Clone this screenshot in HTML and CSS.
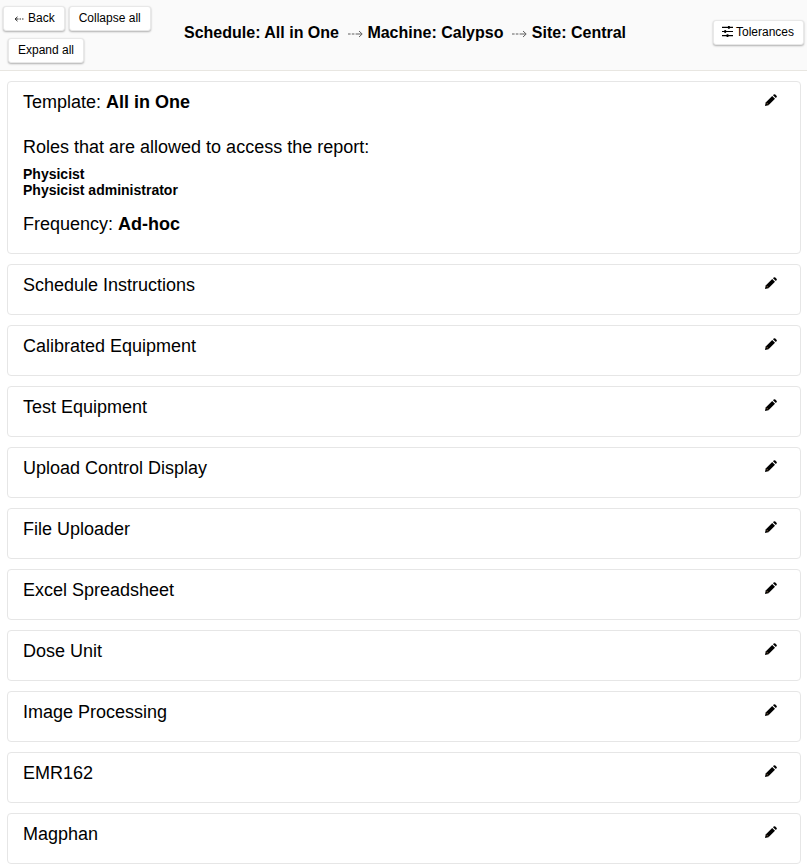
FILE: index.html
```html
<!DOCTYPE html>
<html lang="en">
<head>
<meta charset="utf-8">
<title>Schedule</title>
<link rel="stylesheet" href="styles.css">
</head>
<body>
<svg class="defs" width="0" height="0" aria-hidden="true">
  <symbol id="pencil" viewBox="0 0 12 12">
    <path d="M0 12l.7-3.5L7.2 2l2.8 2.8L3.5 11.3z"/>
    <path d="M8 1.2l.7-.7a1.2 1.2 0 0 1 1.6 0l1.2 1.2a1.2 1.2 0 0 1 0 1.6l-.7.7z"/>
    <path d="M1.5 8.8l1.7 1.7" stroke="#8a6a45" stroke-width=".9" fill="none"/>
  </symbol>
  <symbol id="dash-right" viewBox="0 0 15 8">
    <path d="M0 4h2.6M3.8 4h2.6M7.6 4h6M11 1L14.2 4 11 7" fill="none" stroke="#5f5f5f" stroke-width="1"/>
  </symbol>
  <symbol id="dash-left" viewBox="0 0 10 8">
    <path d="M9.5 4H8M7 4H5.5M4.5 4H1M3.5 1.8L1 4l2.5 2.2" fill="none" stroke="#333" stroke-width="1"/>
  </symbol>
</svg>
<header class="topbar">
  <div class="actions">
    <button class="btn"><svg class="back-arrow"><use href="#dash-left"/></svg>Back</button>
    <button class="btn">Collapse all</button>
    <button class="btn btn-expand">Expand all</button>
  </div>
  <h1 class="crumbs">Schedule: All in One <svg class="arrow"><use href="#dash-right"/></svg> Machine: Calypso <svg class="arrow"><use href="#dash-right"/></svg> Site: Central</h1>
  <button class="btn btn-tol">
    <svg class="sliders" viewBox="0 0 12 12" width="11" height="11" aria-hidden="true"><path d="M0 1.5h12M0 6h12M0 10.5h12" stroke="#000" stroke-width="1.2"/><rect x="6.5" y="0" width="2" height="3"/><rect x="2.5" y="4.5" width="2" height="3"/><rect x="5" y="9" width="2" height="3"/></svg>
    Tolerances
  </button>
</header>
<main class="list">
  <section class="card card-main">
    <div class="card-head">
      <div class="card-title">Template: <b>All in One</b></div>
      <svg class="pencil"><use href="#pencil"/></svg>
    </div>
    <p class="line roles-label">Roles that are allowed to access the report:</p>
    <div class="roles"><div>Physicist</div><div>Physicist administrator</div></div>
    <p class="line freq">Frequency: <b>Ad-hoc</b></p>
  </section>
  <section class="card"><div class="card-head"><div class="card-title">Schedule Instructions</div><svg class="pencil"><use href="#pencil"/></svg></div></section>
  <section class="card"><div class="card-head"><div class="card-title">Calibrated Equipment</div><svg class="pencil"><use href="#pencil"/></svg></div></section>
  <section class="card"><div class="card-head"><div class="card-title">Test Equipment</div><svg class="pencil"><use href="#pencil"/></svg></div></section>
  <section class="card"><div class="card-head"><div class="card-title">Upload Control Display</div><svg class="pencil"><use href="#pencil"/></svg></div></section>
  <section class="card"><div class="card-head"><div class="card-title">File Uploader</div><svg class="pencil"><use href="#pencil"/></svg></div></section>
  <section class="card"><div class="card-head"><div class="card-title">Excel Spreadsheet</div><svg class="pencil"><use href="#pencil"/></svg></div></section>
  <section class="card"><div class="card-head"><div class="card-title">Dose Unit</div><svg class="pencil"><use href="#pencil"/></svg></div></section>
  <section class="card"><div class="card-head"><div class="card-title">Image Processing</div><svg class="pencil"><use href="#pencil"/></svg></div></section>
  <section class="card"><div class="card-head"><div class="card-title">EMR162</div><svg class="pencil"><use href="#pencil"/></svg></div></section>
  <section class="card"><div class="card-head"><div class="card-title">Magphan</div><svg class="pencil"><use href="#pencil"/></svg></div></section>
</main>
</body>
</html>
```
FILE: styles.css
```css
* { box-sizing: border-box; }
html, body { margin: 0; padding: 0; }
body {
  background: #fff;
  color: #000;
  font-family: "Liberation Sans", Arial, sans-serif;
  overflow: hidden;
}
.defs { display: block; height: 0; }
.topbar {
  display: flex;
  align-items: flex-start;
  height: 71px;
  padding: 6px 3px 0 3px;
  background: #fafafa;
  border-bottom: 1px solid #e8e6e1;
}
.actions {
  display: flex;
  flex-wrap: wrap;
  width: 152px;
  gap: 7px 4px;
  flex: none;
}
.btn {
  display: inline-flex;
  align-items: center;
  justify-content: center;
  height: 25px;
  padding: 0 9px 2px;
  background: #fff;
  border: 1px solid #e8e8e8;
  border-radius: 3px;
  box-shadow: 0 1px 2px rgba(0,0,0,.3);
  color: #000;
  font: 12px "Liberation Sans", Arial, sans-serif;
  white-space: nowrap;
}
.btn-expand { margin-left: 5px; }
.btn-tol { margin: 14px 0 0 0; flex: none; width: 91px; padding: 0 1px 2px 0; gap: 3px; }
.back-arrow { width: 10px; height: 8px; margin: 2px 4px 0 1px; flex: none; }
.sliders { flex: none; }
.crumbs {
  flex: 1;
  margin: 17px 0 0 0;
  padding-left: 29px;
  font-size: 16px;
  line-height: 20px;
  font-weight: 700;
  white-space: nowrap;
}
.arrow {
  display: inline-block;
  width: 15px;
  height: 8px;
  margin-left: 4.5px;
}
.list {
  display: flex;
  flex-direction: column;
  gap: 10px;
  padding: 10px 6px 0 7px;
}
.card {
  height: 51px;
  padding: 10px 15px 0 15px;
  background: #fff;
  border: 1px solid #e6e6e6;
  border-radius: 4px;
}
.card-main { height: 173px; }
.card-head {
  display: flex;
  justify-content: space-between;
  align-items: flex-start;
}
.card-title {
  font-size: 18px;
  line-height: 21px;
}
.pencil { flex: none; width: 12px; height: 12px; margin: 2px 8px 0 0; }
.line {
  margin: 0;
  font-size: 18px;
  line-height: 21px;
}
.roles-label { margin-top: 24px; }
.roles {
  margin-top: 8px;
  font-size: 14px;
  line-height: 16px;
  font-weight: 700;
}
.freq { margin-top: 16px; }
```
